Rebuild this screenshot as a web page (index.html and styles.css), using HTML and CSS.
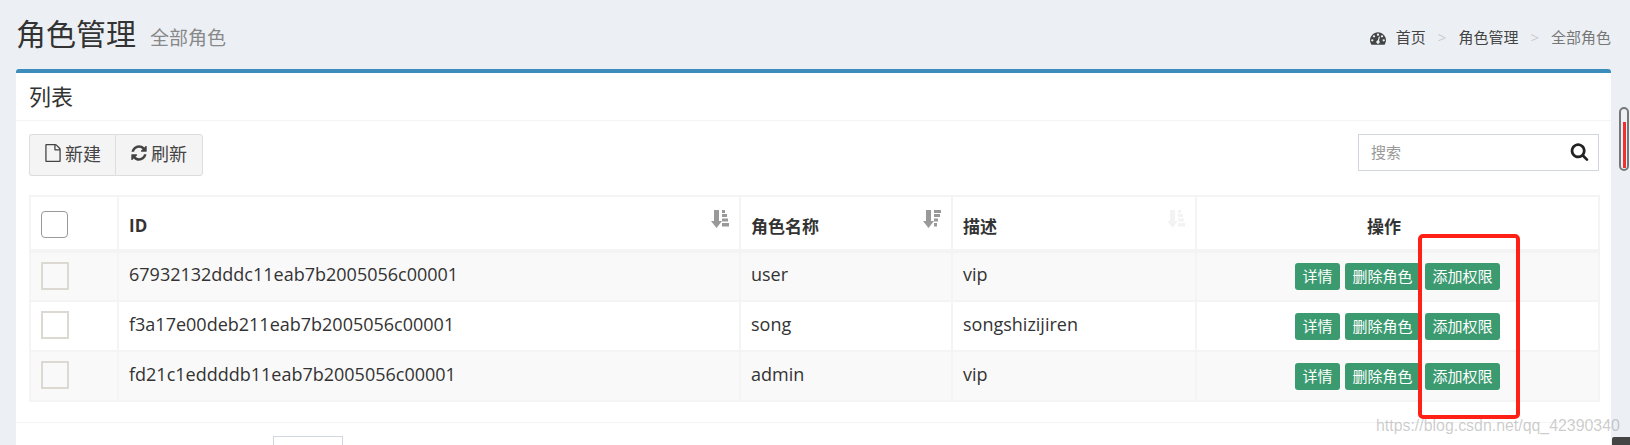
FILE: index.html
```html
<!DOCTYPE html>
<html lang="zh">
<head>
<meta charset="utf-8">
<title>角色管理</title>
<link rel="stylesheet" href="styles.css">
</head>
<body>
<svg class="defs" width="0" height="0" aria-hidden="true">
  <symbol id="i-dash" viewBox="0 0 1792 1792"><path d="M384 1152q0-53-37.5-90.5t-90.5-37.5-90.5 37.5-37.5 90.5 37.5 90.5 90.5 37.5 90.5-37.5 37.5-90.5zm192-448q0-53-37.5-90.5t-90.5-37.5-90.5 37.5-37.5 90.5 37.5 90.5 90.5 37.5 90.5-37.5 37.5-90.5zm428 481l101-382q6-26-7.5-48.5t-38.5-29.5-48 6.5-30 39.5l-101 382q-60 5-107 43.5t-63 98.5q-20 77 20 146t117 89 146-20 89-117q16-60-6-117t-72-91zm660-33q0-53-37.5-90.5t-90.5-37.5-90.5 37.5-37.5 90.5 37.5 90.5 90.5 37.5 90.5-37.5 37.5-90.5zm-640-640q0-53-37.5-90.5t-90.5-37.5-90.5 37.5-37.5 90.5 37.5 90.5 90.5 37.5 90.5-37.5 37.5-90.5zm448 192q0-53-37.5-90.5t-90.5-37.5-90.5 37.5-37.5 90.5 37.5 90.5 90.5 37.5 90.5-37.5 37.5-90.5zm320 448q0 261-141 483-19 29-54 29h-1402q-35 0-54-29-141-221-141-483 0-182 71-348t191-286 286-191 348-71 348 71 286 191 191 286 71 348z"/></symbol>
  <symbol id="i-file" viewBox="0 0 1792 1792"><path d="M1596 380q28 28 48 76t20 88v1152q0 40-28 68t-68 28h-1344q-40 0-68-28t-28-68v-1600q0-40 28-68t68-28h896q40 0 88 20t76 48zm-444-244v376h376q-10-29-22-41l-313-313q-12-12-41-22zm384 1528v-1024h-416q-40 0-68-28t-28-68v-416h-768v1536h1280z"/></symbol>
  <symbol id="i-refresh" viewBox="0 0 1792 1792"><path d="M1639 1056q0 5-1 7-64 268-268 434.5t-478 166.5q-146 0-282.5-55t-243.5-157l-129 129q-19 19-45 19t-45-19-19-45v-448q0-26 19-45t45-19h448q26 0 45 19t19 45-19 45l-137 137q71 66 161 102t187 36q134 0 250-65t186-179q11-17 53-117 8-23 30-23h192q13 0 22.5 9.5t9.5 22.5zm25-800v448q0 26-19 45t-45 19h-448q-26 0-45-19t-19-45 19-45l138-138q-148-137-349-137-134 0-250 65t-186 179q-11 17-53 117-8 23-30 23h-199q-13 0-22.5-9.5t-9.5-22.5v-7q65-268 270-434.5t480-166.5q146 0 284 55.5t245 156.5l130-129q19-19 45-19t45 19 19 45z"/></symbol>
  <symbol id="i-search" viewBox="0 0 1792 1792"><path d="M1216 832q0-185-131.5-316.5t-316.5-131.5-316.5 131.5-131.5 316.5 131.5 316.5 316.5 131.5 316.5-131.5 131.5-316.5zm512 832q0 52-38 90t-90 38q-54 0-90-38l-343-342q-179 124-399 124-143 0-273.5-55.5t-225-150-150-225-55.5-273.5 55.5-273.5 150-225 225-150 273.5-55.5 273.5 55.5 225 150 150 225 55.5 273.5q0 220-124 399l343 343q37 37 37 90z"/></symbol>
  <symbol id="i-sort-asc" viewBox="0 0 18 18"><path d="M3 0h5v11h3l-5.500 7-5.500-7h3z"/><path d="M11 0h3v3h-3zM11 4h5v3h-5zM11 8.500h6v3h-6zM11 13h7v3.500h-7z"/></symbol>
  <symbol id="i-sort-desc" viewBox="0 0 18 18"><path d="M3 0h5v11h3l-5.500 7-5.500-7h3z"/><path d="M11 0h7v3h-7zM11 4h6v3h-6zM11 8.500h4v3h-4zM11 13h3v3.500h-3z"/></symbol>
</svg>

<section class="content-header">
  <h1 class="page-title">角色管理<small class="page-sub">全部角色</small></h1>
  <ol class="crumbs">
    <li class="crumb"><svg class="crumb-icon"><use href="#i-dash"/></svg>首页</li>
    <li class="crumb-sep">&gt;</li>
    <li class="crumb">角色管理</li>
    <li class="crumb-sep">&gt;</li>
    <li class="crumb crumb-active">全部角色</li>
  </ol>
</section>

<section class="box">
  <header class="box-header">列表</header>
  <div class="box-body">
    <div class="toolbar">
      <div class="btn-group">
        <button class="tool-btn"><svg class="tool-icon"><use href="#i-file"/></svg>新建</button>
        <button class="tool-btn"><svg class="tool-icon"><use href="#i-refresh"/></svg>刷新</button>
      </div>
      <div class="search">
        <span class="search-text">搜索</span>
        <svg class="search-icon"><use href="#i-search"/></svg>
      </div>
    </div>
    <table class="grid">
      <colgroup>
        <col class="c1"><col class="c2"><col class="c3"><col class="c4"><col class="c5">
      </colgroup>
      <thead>
        <tr>
          <th class="cell-check"><span class="check check-head"></span></th>
          <th>ID<svg class="sort"><use href="#i-sort-asc"/></svg></th>
          <th>角色名称<svg class="sort"><use href="#i-sort-desc"/></svg></th>
          <th>描述<svg class="sort sort-off"><use href="#i-sort-asc"/></svg></th>
          <th class="th-center">操作</th>
        </tr>
      </thead>
      <tbody>
        <tr class="odd">
          <td class="cell-check"><span class="check"></span></td>
          <td>67932132dddc11eab7b2005056c00001</td><td>user</td><td>vip</td>
          <td class="actions"><div class="act-row"><a class="act">详情</a><a class="act">删除角色</a><a class="act">添加权限</a></div></td>
        </tr>
        <tr>
          <td class="cell-check"><span class="check"></span></td>
          <td>f3a17e00deb211eab7b2005056c00001</td><td>song</td><td>songshizijiren</td>
          <td class="actions"><div class="act-row"><a class="act">详情</a><a class="act">删除角色</a><a class="act">添加权限</a></div></td>
        </tr>
        <tr class="odd">
          <td class="cell-check"><span class="check"></span></td>
          <td>fd21c1eddddb11eab7b2005056c00001</td><td>admin</td><td>vip</td>
          <td class="actions"><div class="act-row"><a class="act">详情</a><a class="act">删除角色</a><a class="act">添加权限</a></div></td>
        </tr>
      </tbody>
    </table>
  </div>
  <footer class="box-footer"><span class="page-size"></span></footer>
</section>

<div class="annot-box"></div>
<div class="watermark">https://blog.csdn.net/qq_42390340</div>
<div class="scroll-mark"><span class="scroll-fill"></span></div>
<div class="corner"></div>
</body>
</html>
```

FILE: styles.css
```css
* { box-sizing: border-box; }
html, body { height: 445px; overflow: hidden; }
body {
  margin: 0;
  position: relative;
  background: #ecf0f5;
  color: #333;
  font-family: "Open Sans", "Noto Sans CJK SC", sans-serif;
  font-size: 17px;
}
.defs { position: absolute; }

.content-header {
  height: 69px;
  padding: 16px 19px 0 16px;
  display: flex;
  justify-content: space-between;
  align-items: flex-start;
}
.page-title {
  margin: 0;
  font-size: 30px;
  font-weight: 400;
  line-height: 36px;
  color: #333;
}
.page-sub {
  margin-left: 14px;
  font-size: 19px;
  color: #888;
}
.crumbs {
  list-style: none;
  margin: 11px 0 0;
  padding: 0;
  display: flex;
  align-items: center;
  font-size: 15px;
  line-height: 20px;
  color: #444;
}
.crumb-icon { width: 16px; height: 16px; margin-right: 10px; fill: #444; vertical-align: -3px; }
.crumb-sep { margin: 0 12px; color: #ccc; }
.crumb-active { color: #777; }

.box {
  margin: 0 19px 0 16px;
  background: #fff;
  border-top: 4px solid #3c8dbc;
  border-radius: 3px;
  height: 400px;
}
.box-header {
  height: 48px;
  padding: 0 13px 4px;
  display: flex;
  align-items: center;
  font-size: 22px;
  border-bottom: 1px solid #f4f4f4;
}
.box-body { padding: 13px 12px 0 13px; height: 302px; border-bottom: 1px solid #f4f4f4; }
.toolbar { display: flex; justify-content: space-between; align-items: flex-start; height: 61px; }
.btn-group { display: flex; }
.tool-btn {
  height: 42px;
  padding: 0 14px 4px 14px;
  display: flex;
  align-items: center;
  background: #f4f4f4;
  border: 1px solid #ddd;
  color: #444;
  font: inherit;
  font-size: 18px;
}
.tool-btn:first-child { border-radius: 3px 0 0 3px; border-right: 0; }
.tool-btn:last-child { border-radius: 0 3px 3px 0; padding-right: 15px; }
.tool-icon { width: 18px; height: 18px; margin-right: 3px; fill: #444; }

.search {
  width: 241px;
  height: 37px;
  padding: 0 9px 2px 12px;
  display: flex;
  justify-content: space-between;
  align-items: center;
  background: #fff;
  border: 1px solid #d2d6de;
}
.search-text { font-size: 15px; color: #999; }
.search-icon { width: 19px; height: 19px; fill: #222; }

.grid {
  width: 1569px;
  border-collapse: collapse;
  table-layout: fixed;
  border: 2px solid #f4f4f4;
}
.c1 { width: 88px; }
.c2 { width: 622px; }
.c3 { width: 212px; }
.c4 { width: 244px; }
.c5 { width: 403px; }
.grid th, .grid td {
  border: 2px solid #f4f4f4;
  padding: 0 10px;
  text-align: left;
  vertical-align: middle;
}
.grid th {
  position: relative;
  height: 55px;
  padding-top: 4px;
  font-weight: 700;
  font-size: 17px;
  border-bottom-width: 4px;
}
.grid td { height: 50px; font-size: 18px; font-weight: 400; padding-bottom: 5px; }
.grid .th-center { text-align: center; padding-right: 37px; }
.grid th.cell-check { padding: 3px 0 0 10px; }
.grid td.cell-check { padding: 0 0 2px 10px; }
.grid .actions { padding: 0 10px; }
.act-row { display: flex; justify-content: center; gap: 5px; }
.odd { background: #f9f9f9; }

.sort { position: absolute; top: 13px; right: 10px; width: 18px; height: 18px; fill: #999; }
.sort-off { fill: #f3f3f3; }

.check {
  display: block;
  width: 28px;
  height: 28px;
  border: 2px solid #dcd8d2;
}
.check-head {
  width: 27px;
  height: 27px;
  border: 1px solid #999;
  border-radius: 4px;
  background: #fff;
}
.act {
  display: block;
  height: 27px;
  padding: 0 7.5px;
  font-size: 15px;
  line-height: 26px;
  background: #3c9a70;
  color: #fff;
  border-radius: 3px;
}

.box-footer { padding: 13px 0 0 257px; height: 40px; }
.page-size {
  display: block;
  width: 70px;
  height: 30px;
  border: 1px solid #d2d6de;
}

.annot-box {
  position: absolute;
  left: 1418px;
  top: 234px;
  width: 102px;
  height: 185px;
  border: 4px solid #ff2116;
  border-radius: 5px;
}
.watermark {
  position: absolute;
  left: 1376px;
  top: 416px;
  font-family: "Liberation Sans", sans-serif;
  font-size: 15.9px;
  line-height: 20px;
  color: rgba(120, 120, 120, 0.38);
  white-space: nowrap;
}
.scroll-mark {
  position: absolute;
  left: 1619px;
  top: 107px;
  width: 10px;
  height: 64px;
  padding: 13px 1px 1px 2px;
  border: 2px solid #777;
  border-radius: 5px;
  background: #eef0f4;
}
.scroll-fill { display: block; height: 100%; background: #ee3035; }
.corner {
  position: absolute;
  left: 1612px;
  top: 437px;
  width: 18px;
  height: 8px;
  background: #444;
  border-radius: 2px 0 0 0;
}
```
